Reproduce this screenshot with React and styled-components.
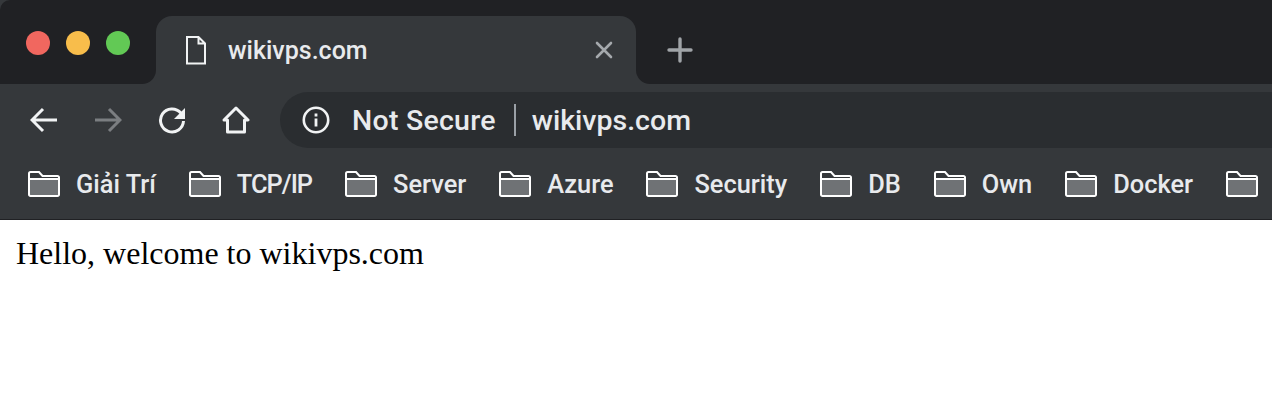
import styled, { createGlobalStyle } from 'styled-components';

const GlobalStyle = createGlobalStyle`
    html, body {
        margin: 0;
        padding: 0;
        background: #fff;
    }
`;

const Chrome = styled.div`
    width: 1272px;
    font-family: Roboto, "Liberation Sans", sans-serif;
    font-weight: 500;
    color: #e8eaed;
`;

// TAB STRIP
const TabStrip = styled.div`
    display: flex;
    height: 84px;
    background: #35383b;
`;
const WindowControls = styled.div`
    display: flex;
    gap: 16px;
    width: 156px;
    padding: 31px 0 0 26px;
    box-sizing: border-box;
    background: #202124;
    border-bottom-right-radius: 14px;
    border-top-left-radius: 10px;
`;
const Light = styled.span`
    width: 24px;
    height: 24px;
    border-radius: 50%;
    background: ${props => props.color};
`;
const TabSlot = styled.div`
    width: 480px;
    padding-top: 16px;
    box-sizing: border-box;
    background: #202124;
`;
const Tab = styled.div`
    display: flex;
    align-items: center;
    height: 68px;
    padding: 0 23px 0 30px;
    box-sizing: border-box;
    background: #35383b;
    border-radius: 16px 16px 0 0;

    .title {
        flex: 1;
        margin-left: 22px;
        font-size: 25px;
    }
`;
const NewTabArea = styled.div`
    flex: 1;
    display: flex;
    align-items: center;
    padding: 16px 0 0 31px;
    background: #202124;
    border-bottom-left-radius: 14px;
`;

// TOOLBAR
const Toolbar = styled.div`
    display: flex;
    align-items: center;
    height: 72px;
    padding-left: 26px;
    background: #35383b;
`;
const NavButton = styled.div`
    display: flex;
    width: 36px;
    margin-right: 28px;
    justify-content: center;
`;
const AddressBar = styled.div`
    flex: 1;
    display: flex;
    align-items: center;
    height: 56px;
    margin-left: -2px;
    padding-left: 22px;
    background: #2a2d30;
    border-radius: 28px 0 0 28px;
    font-size: 28.500px;
`;
const NotSecure = styled.span`
    margin-left: 22px;
    letter-spacing: .25px;
`;
const Divider = styled.span`
    width: 2px;
    height: 32px;
    margin: 0 16px 0 18px;
    background: #9aa0a6;
`;

// BOOKMARKS
const BookmarksBar = styled.div`
    display: flex;
    align-items: center;
    height: 64px;
    padding: 0 0 8px 28px;
    box-sizing: border-box;
    gap: 33px;
    overflow: hidden;
    background: #35383b;
    border-bottom: 1px solid #202124;
`;
const Bookmark = styled.div`
    display: flex;
    align-items: center;
    gap: 16px;
    flex-shrink: 0;
    font-size: 25.400px;
    letter-spacing: ${props => (props.$tight ? '-1px' : '0')};
`;

const Content = styled.p`
    margin: 0;
    padding: 15px 16px 0;
    font-family: "Liberation Serif", serif;
    font-size: 32px;
    line-height: 36px;
    color: #000;
`;

function FolderIcon() {
    return (
        <svg width="32" height="26" viewBox="0 0 32 26">
            <path d="M1 8h30v15.5a1.5 1.5 0 0 1-1.5 1.5h-27A1.5 1.5 0 0 1 1 23.5z" fill="#6f7275" />
            <path d="M1 2.5A1.5 1.5 0 0 1 2.5 1h8.5l3.5 4h15A1.5 1.5 0 0 1 31 6.5v17a1.5 1.5 0 0 1-1.5 1.5h-27A1.5 1.5 0 0 1 1 23.5zM1 8h30" fill="none" stroke="#fff" strokeWidth="2" />
        </svg>
    );
}

const bookmarks = ['Giải Trí', 'TCP/IP', 'Server', 'Azure', 'Security', 'DB', 'Own', 'Docker', ''];

export default function App() {
    return (
        <>
            <GlobalStyle />
            <Chrome>
                <TabStrip>
                    <WindowControls>
                        <Light color="#f1675f" />
                        <Light color="#f8bd4b" />
                        <Light color="#62c955" />
                    </WindowControls>
                    <TabSlot>
                        <Tab>
                            <svg width="20" height="29" viewBox="0 0 20 29">
                                <path d="M1 1h11.5L19 7.5V27.500H1z M12.500 1v6.500H19" fill="none" stroke="#f1f3f4" strokeWidth="2" />
                            </svg>
                            <span className="title">wikivps.com</span>
                            <svg width="18" height="18" viewBox="0 0 18 18">
                                <path d="M2 2l14 14M16 2L2 16" stroke="#a5a9ad" strokeWidth="2.600" strokeLinecap="round" />
                            </svg>
                        </Tab>
                    </TabSlot>
                    <NewTabArea>
                        <svg width="26" height="26" viewBox="0 0 26 26">
                            <path d="M13 2v22M2 13h22" stroke="#a0a4a8" strokeWidth="3.400" strokeLinecap="round" />
                        </svg>
                    </NewTabArea>
                </TabStrip>
                <Toolbar>
                    <NavButton>
                        <svg width="28" height="26" viewBox="0 0 28 26">
                            <path d="M27 13H3M13 2L2 13l11 11" fill="none" stroke="#f1f3f4" strokeWidth="3" />
                        </svg>
                    </NavButton>
                    <NavButton>
                        <svg width="28" height="26" viewBox="0 0 28 26">
                            <path d="M1 13h24M15 2l11 11-11 11" fill="none" stroke="#7b7e81" strokeWidth="3" />
                        </svg>
                    </NavButton>
                    <NavButton>
                        <svg width="28" height="28" viewBox="0 0 28 28">
                            <path d="M22.800 7A11.500 11.500 0 1 0 25.500 15" fill="none" stroke="#f1f3f4" strokeWidth="3" />
                            <path d="M27 2v11H16z" fill="#f1f3f4" />
                        </svg>
                    </NavButton>
                    <NavButton>
                        <svg width="28" height="28" viewBox="0 0 28 28">
                            <path d="M2 14L14 2l12 12h-3.500v12h-17V14z" fill="none" stroke="#f1f3f4" strokeWidth="3" strokeLinejoin="round" />
                        </svg>
                    </NavButton>
                    <AddressBar>
                        <svg width="28" height="28" viewBox="0 0 28 28">
                            <circle cx="14" cy="14" r="12.200" fill="none" stroke="#f1f3f4" strokeWidth="2.600" />
                            <path d="M14 12.500v8M14 7.500v3" stroke="#f1f3f4" strokeWidth="2.800" />
                        </svg>
                        <NotSecure>Not Secure</NotSecure>
                        <Divider />
                        <span>wikivps.com</span>
                    </AddressBar>
                </Toolbar>
                <BookmarksBar>
                    {bookmarks.map((name, i) => (
                        <Bookmark key={i} $tight={name === 'TCP/IP'}>
                            <FolderIcon />
                            {name && <span>{name}</span>}
                        </Bookmark>
                    ))}
                </BookmarksBar>
            </Chrome>
            <Content>Hello, welcome to wikivps.com</Content>
        </>
    );
}
